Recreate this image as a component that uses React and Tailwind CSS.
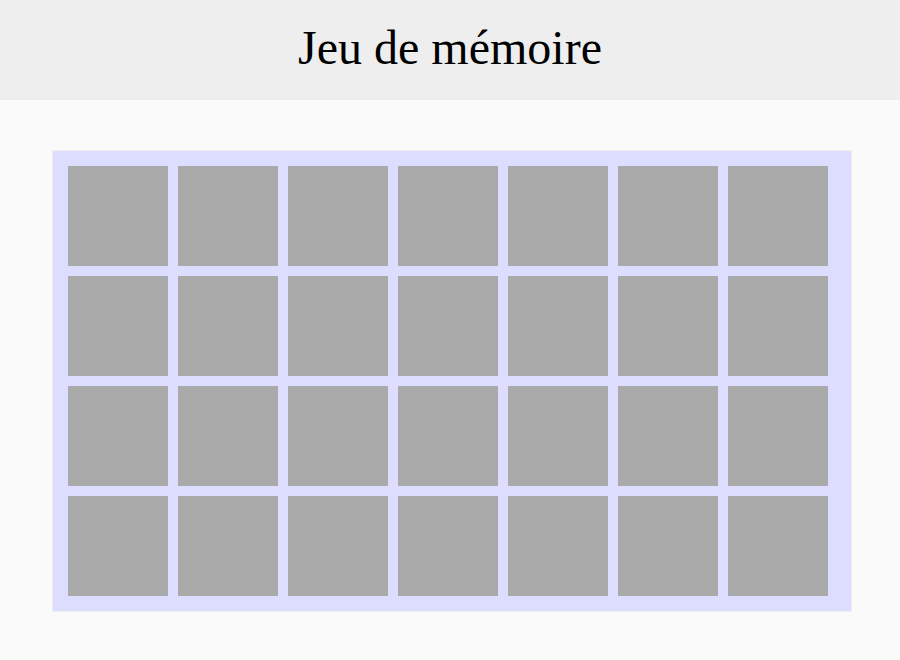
const cards = Array.from({ length: 28 }, (_, i) => i)

const App = () => {
  return (
    <div className="min-h-[660px] bg-[#fafafa] font-['Liberation_Serif',serif]">
      <header className="flex h-[100px] items-center justify-center bg-[#eeeeee] pb-[4px]">
        <h1 className="text-[48px] leading-none text-black">Jeu de mémoire</h1>
      </header>
      <div className="pt-[50px]">
        <div className="ml-[52px] w-[800px] border border-[#eeeeee] bg-[#ddddff] pt-[15px] pb-[15px] pl-[15px] pr-[23px]">
          <div className="grid grid-cols-[repeat(7,100px)] gap-[10px]">
            {cards.map(i => (
              <div key={i} className="h-[100px] w-[100px] bg-[#aaaaaa]" />
            ))}
          </div>
        </div>
      </div>
    </div>
  )
}

export default App
